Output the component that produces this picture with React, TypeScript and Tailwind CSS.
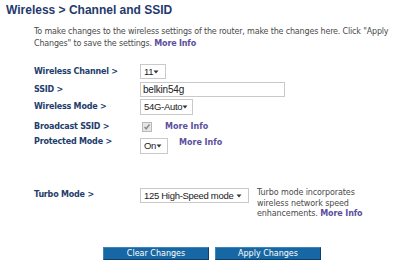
const navy = "text-[#223d6b]";

function Arrow() {
  return (
    <svg width="6" height="4" viewBox="0 0 6 4" className="shrink-0">
      <path d="M0.5 0.5 L5.5 0.5 L3 3.5 Z" fill="#333" />
    </svg>
  );
}

function FakeSelect({ value, w, h = 15 }: { value: string; w: number; h?: number }) {
  return (
    <div
      className="flex items-center justify-between whitespace-nowrap border border-[#c9c9c9] bg-white pl-[3px] pr-[6px] font-['Liberation_Sans',Arial,sans-serif] text-[9.5px] text-[#222] leading-none tracking-[-0.3px]"
      style={{ width: w, height: h }}
    >
      <span>{value}</span>
      <Arrow />
    </div>
  );
}

function MoreInfo({ className = "" }: { className?: string }) {
  return (
    <span className={"font-bold whitespace-nowrap text-[#5b4f9e] font-['DejaVu_Sans',Verdana,sans-serif] text-[8px] " + className}>
      More Info
    </span>
  );
}

function Label({ children }: { children: React.ReactNode }) {
  return (
    <div className={"w-[106px] shrink-0 whitespace-nowrap font-bold text-[8px] tracking-[-0.2px] font-['DejaVu_Sans',Verdana,sans-serif] " + navy}>
      {children}
    </div>
  );
}

export default function App() {
  return (
    <div className="w-[402px] h-[280px] bg-white overflow-hidden relative">
      <h1 className="pl-[6px] pt-[3px] font-['Liberation_Sans',Arial,sans-serif] font-bold text-[12px] leading-[14px] text-[#1f3a6c]">
        Wireless &gt; Channel and SSID
      </h1>

      <p className="ml-[34px] mt-[9px] whitespace-nowrap font-['DejaVu_Sans',Verdana,sans-serif] text-[8px] leading-[12px] tracking-[-0.17px] text-[#4a4a4a]">
        To make changes to the wireless settings of the router, make the changes here. Click "Apply
        <br />
        Changes" to save the settings. <MoreInfo />
      </p>

      <div className="ml-[34px] mt-[14px] flex flex-col">
        <div className="flex items-center h-[15px]">
          <Label>Wireless Channel &gt;</Label>
          <FakeSelect value="11" w={26} />
        </div>
        <div className="flex items-center h-[15px] mt-[3px]">
          <Label>SSID &gt;</Label>
          <div className="w-[145px] h-[15px] border border-[#c9c9c9] bg-white pl-[2px] flex items-center font-['Liberation_Sans',Arial,sans-serif] text-[10px] text-[#222] leading-none tracking-[-0.2px]">
            belkin54g
          </div>
        </div>
        <div className="flex items-center h-[16px] mt-[2px]">
          <Label>Wireless Mode &gt;</Label>
          <FakeSelect value="54G-Auto" w={53} h={16} />
        </div>
        <div className="flex items-center h-[12px] mt-[6px]">
          <Label>Broadcast SSID &gt;</Label>
          <div className="ml-[2px] w-[10px] h-[10px] border border-[#b8b8b8] bg-[#e6e6e6] flex items-center justify-center">
            <svg width="8" height="8" viewBox="0 0 8 8">
              <path d="M1.5 4 L3.2 5.8 L6.5 1.5" stroke="#8a8a8a" strokeWidth="1.4" fill="none" />
            </svg>
          </div>
          <MoreInfo className="ml-[13px]" />
        </div>
        <div className="flex items-start mt-[3px]">
          <Label>
            <div>Protected Mode &gt;</div>
          </Label>
          <div className="mt-[2px] flex items-center">
            <FakeSelect value="On" w={28} h={16} />
          </div>
          <MoreInfo className="ml-[11px] mt-[1px]" />
        </div>
        <div className="flex items-start mt-[34px]">
          <Label>
            <div className="mt-[1px]">Turbo Mode &gt;</div>
          </Label>
          <FakeSelect value="125 High-Speed mode" w={109} h={15} />
          <p className="ml-[8px] w-[125px] font-['DejaVu_Sans',Verdana,sans-serif] text-[8px] leading-[10.5px] tracking-[-0.1px] text-[#4a4a4a]">
            Turbo mode incorporates
            <br />
            wireless network speed
            <br />
            enhancements. <MoreInfo />
          </p>
        </div>
      </div>

      <div className="absolute left-[103px] top-[247px] flex gap-[6px]">
        {["Clear Changes", "Apply Changes"].map((t) => (
          <button
            key={t}
            className="w-[106px] h-[13px] bg-[#1667a3] border border-[#0f3f66] border-t-[#3b86bd] border-l-[#3b86bd] text-white font-['DejaVu_Sans',Verdana,sans-serif] text-[8px] leading-none flex items-center justify-center"
          >
            {t}
          </button>
        ))}
      </div>
    </div>
  );
}
